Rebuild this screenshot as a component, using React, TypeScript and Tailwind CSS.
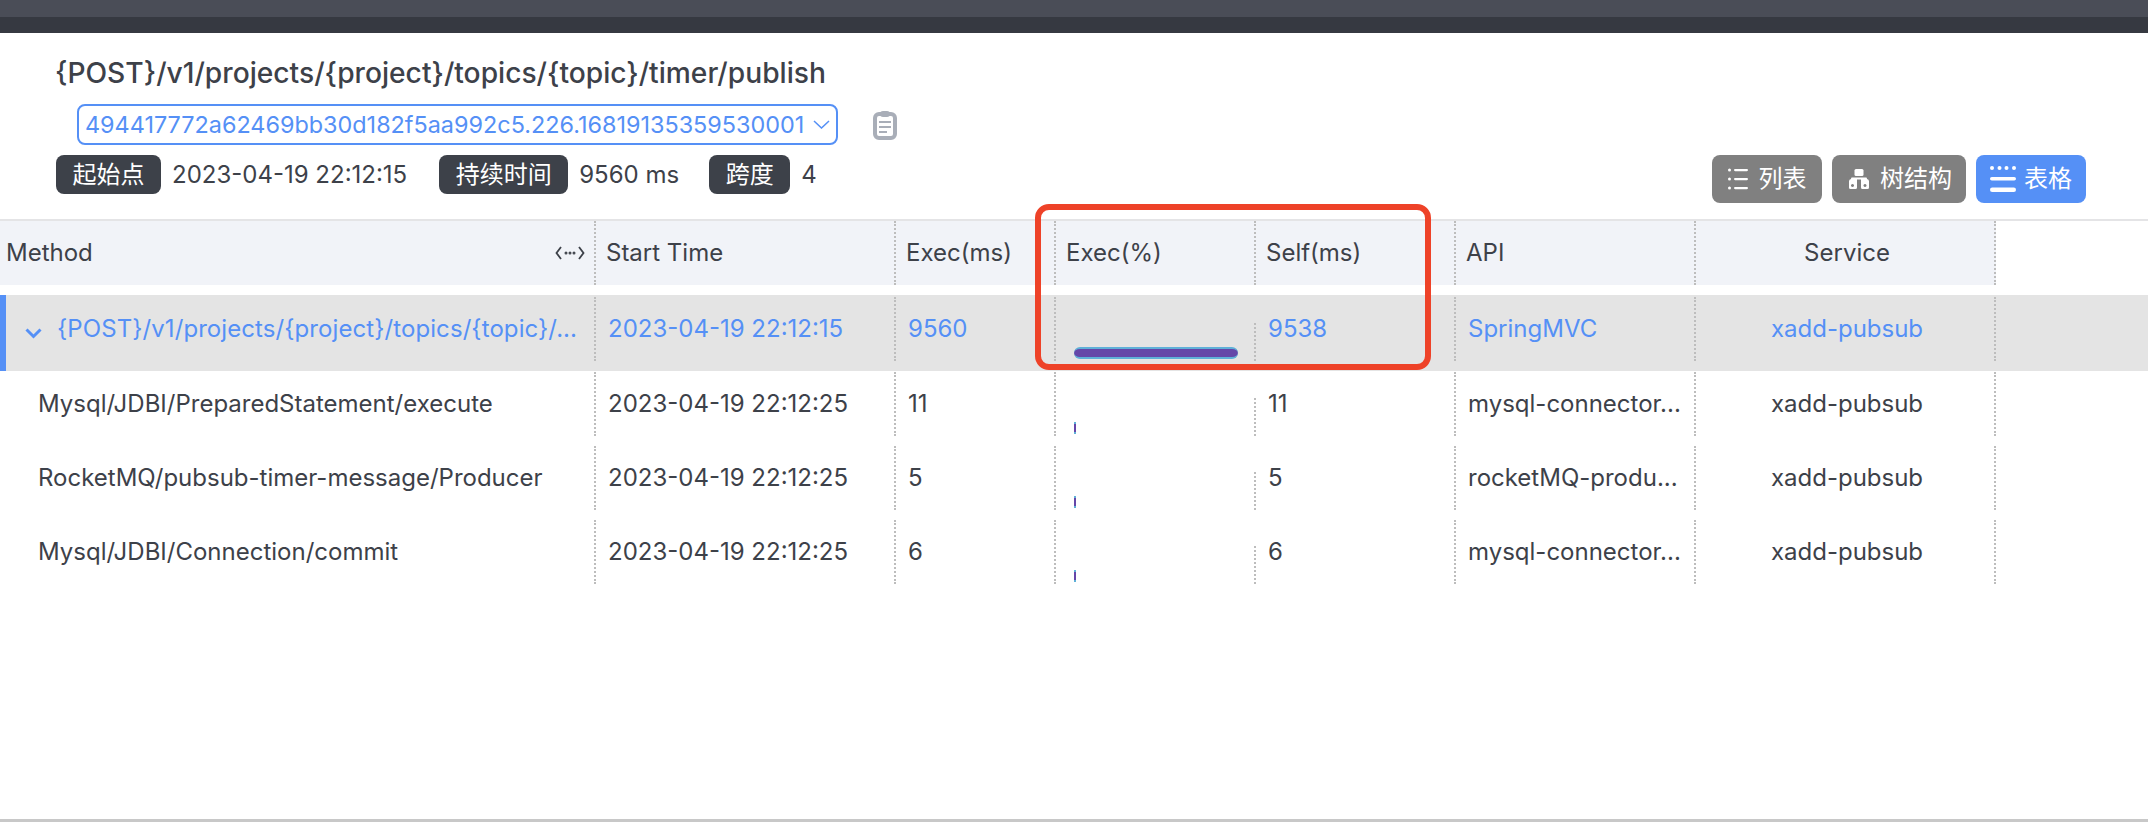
import React from "react";

const font = "[font-family:Inter,'Noto_Sans_CJK_SC',sans-serif]";

const childRows = [
  { method: "Mysql/JDBI/PreparedStatement/execute", exec: "11", pct: 2, self: "11", api: "mysql-connector..." },
  { method: "RocketMQ/pubsub-timer-message/Producer", exec: "5", pct: 2, self: "5", api: "rocketMQ-produ..." },
  { method: "Mysql/JDBI/Connection/commit", exec: "6", pct: 2, self: "6", api: "mysql-connector..." },
];

const Tag = ({ children }: { children: React.ReactNode }) => (
  <span className="flex h-[39px] items-center rounded-lg bg-[#3d4149] px-[16.5px] text-white">{children}</span>
);

const ListIcon = () => (
  <svg width="20" height="22" viewBox="0 0 20 22" fill="white">
    <circle cx="1.5" cy="2" r="1.5" />
    <circle cx="1.5" cy="11" r="1.5" />
    <circle cx="1.5" cy="20" r="1.5" />
    <rect x="6" y="1" width="14" height="2.2" rx="1.1" />
    <rect x="6" y="10" width="14" height="2.2" rx="1.1" />
    <rect x="6" y="19" width="14" height="2.2" rx="1.1" />
  </svg>
);

const TreeIcon = () => (
  <svg width="20" height="20" viewBox="0 0 20 20" fill="white">
    <rect x="5.5" y="0" width="9" height="7" rx="1.5" />
    <rect x="2" y="8.5" width="16" height="2" rx="1" />
    <path d="M2 10 h6 v8.5 a1.5 1.5 0 0 1 -1.5 1.5 h-5 a1.5 1.5 0 0 1 -1.5 -1.5 v-6 a2.5 2.5 0 0 1 2 -2.5 z M3.5 15 a1.5 1.5 0 1 0 0.01 0 z" fillRule="evenodd" />
    <path d="M12 10 h6 a2.5 2.5 0 0 1 2 2.5 v6 a1.5 1.5 0 0 1 -1.5 1.5 h-5 a1.5 1.5 0 0 1 -1.5 -1.5 z M16 15 a1.5 1.5 0 1 0 0.01 0 z" fillRule="evenodd" />
  </svg>
);

const TableIcon = () => (
  <svg width="26" height="26" viewBox="0 0 26 26" fill="white">
    <circle cx="2" cy="2" r="2" />
    <circle cx="9.5" cy="2" r="2" />
    <circle cx="16.5" cy="2" r="2" />
    <circle cx="24" cy="2" r="2" />
    <rect x="0" y="11" width="26" height="3.6" rx="1.8" />
    <rect x="0" y="21.5" width="26" height="4.5" rx="2.25" />
  </svg>
);

const ClipboardIcon = () => (
  <svg width="24" height="30" viewBox="0 0 24 30">
    <rect x="2" y="4" width="20" height="24" rx="4" fill="#fff" stroke="#a9aeb8" strokeWidth="4" />
    <rect x="7" y="1" width="10" height="6" rx="3" fill="#a9aeb8" />
    <rect x="6" y="11" width="12" height="2" fill="#a9aeb8" />
    <rect x="6" y="16" width="12" height="2" fill="#a9aeb8" />
    <rect x="6" y="21" width="8" height="2" fill="#a9aeb8" />
  </svg>
);

const DragIcon = () => (
  <svg width="30" height="16" viewBox="0 0 30 16" fill="none" stroke="#3d4149" strokeWidth="1.8">
    <path d="M6 2 L1.5 8 L6 14" />
    <path d="M24 2 L28.5 8 L24 14" />
    <circle cx="11" cy="8" r="0.6" />
    <circle cx="15" cy="8" r="0.6" />
    <circle cx="19" cy="8" r="0.6" />
  </svg>
);

const gridCols = "grid grid-cols-[596px_300px_160px_200px_200px_240px_300px]";
const dots = "border-r-2 border-dotted border-[#bdbdbd]";

export default function App() {
  return (
    <div className={`flex h-[822px] flex-col bg-white text-[24px] text-[#3d4149] ${font}`}>
      {/* top bars */}
      <div className="h-[17px] bg-[#4a4d57]" />
      <div className="h-4 bg-[#363941]" />

      <div className="flex flex-1 flex-col border-b-[3px] border-[#c8c8c8]">
        {/* header */}
        <div className="flex h-[186px] justify-between">
          <div className="flex flex-col pl-[56px] pt-[20px]">
            <h1 className="-ml-[1px] text-[28.2px] font-medium leading-[40px]">
              {"{POST}/v1/projects/{project}/topics/{topic}/timer/publish"}
            </h1>
            <div className="mt-[11px] flex items-center pl-[21px]">
              <div className="flex h-[41px] w-[761px] items-center justify-between rounded-lg border-2 border-[#5590f6] pl-[6px] pr-[6px] text-[23.4px] text-[#5590f6]">
                <span>494417772a62469bb30d182f5aa992c5.226.16819135359530001</span>
                <svg width="17" height="9" viewBox="0 0 17 9" fill="none" stroke="#5590f6" strokeWidth="1.5">
                  <path d="M1 1 L8.5 8 L16 1" />
                </svg>
              </div>
              <span className="ml-[35px]"><ClipboardIcon /></span>
            </div>
            <div className="mt-[10px] flex items-center">
              <Tag>起始点</Tag>
              <span className="ml-[11px]">2023-04-19 22:12:15</span>
              <span className="ml-[32px]"><Tag>持续时间</Tag></span>
              <span className="ml-[11px]">9560 ms</span>
              <span className="ml-[30px]"><Tag>跨度</Tag></span>
              <span className="ml-[11px]">4</span>
            </div>
          </div>
          <div className="mb-4 flex gap-[10px] self-end pr-[62px] text-white">
            <button className="flex h-[48px] w-[110px] items-center justify-center gap-[11px] rounded-lg bg-[#808080]"><ListIcon />列表</button>
            <button className="flex h-[48px] w-[134px] items-center justify-center gap-[11px] rounded-lg bg-[#808080] pl-[3px]"><TreeIcon />树结构</button>
            <button className="flex h-[48px] w-[110px] items-center justify-center gap-[8px] rounded-lg bg-[#5590f6]"><TableIcon />表格</button>
          </div>
        </div>

        {/* table */}
        <div className="relative border-t-2 border-[#e4e4e6]">
          <div className={`${gridCols} h-[64px] w-[1996px] items-stretch bg-[#f1f3f8]`}>
            <div className={`${dots} flex items-center justify-between pl-[6px] pr-[9px]`}>Method<DragIcon /></div>
            <div className={`${dots} flex items-center pl-[10px]`}>Start Time</div>
            <div className={`${dots} flex items-center pl-[10px]`}>Exec(ms)</div>
            <div className={`${dots} flex items-center pl-[10px]`}>Exec(%)</div>
            <div className={`${dots} flex items-center pl-[10px]`}>Self(ms)</div>
            <div className={`${dots} flex items-center pl-[10px]`}>API</div>
            <div className={`${dots} flex items-center justify-center pl-[4px]`}>Service</div>
          </div>

          {/* root row */}
          <div className="mt-[10px] h-[76px] border-l-[6px] border-[#5590f6] bg-[#e4e4e4] pt-[2px] text-[#5590f6]">
            <div className={`${gridCols} -ml-[6px] h-[64px]`}>
              <div className={`${dots} flex items-center`}>
                <svg className="ml-[25px] mr-[15px] mt-[8px]" width="17" height="11" viewBox="0 0 17 11" fill="none" stroke="#5590f6" strokeWidth="3">
                  <path d="M1.5 1.5 L8.5 8.5 L15.5 1.5" />
                </svg>
                <span className="tracking-[0.08px]">{"{POST}/v1/projects/{project}/topics/{topic}/..."}</span>
              </div>
              <div className={`${dots} flex items-center pl-[12px]`}>2023-04-19 22:12:15</div>
              <div className={`${dots} flex items-center pl-[12px]`}>9560</div>
              <div className="flex items-end">
                <div className="flex-1 pb-[2px] pl-[18px]">
                  <div className="h-[12px] w-[164px] rounded-full border-y-2 border-[#5fb0d8] bg-[#6546a8]" />
                </div>
                <span className={`${dots} h-[38px]`} />
              </div>
              <div className={`${dots} flex items-center pl-[12px]`}>9538</div>
              <div className={`${dots} flex items-center pl-[12px]`}>SpringMVC</div>
              <div className={`${dots} flex items-center justify-center pl-[4px]`}>xadd-pubsub</div>
            </div>
          </div>

          {/* child rows */}
          {childRows.map((row) => (
            <div key={row.method} className={`${gridCols} h-[74px] pt-[1px]`}>
              <div className={`${dots} flex h-[64px] items-center pl-[38px]`}>{row.method}</div>
              <div className={`${dots} flex h-[64px] items-center pl-[12px]`}>2023-04-19 22:12:25</div>
              <div className={`${dots} flex h-[64px] items-center pl-[12px]`}>{row.exec}</div>
              <div className="flex h-[64px] items-end">
                <div className="flex-1 pb-[2px] pl-[18px]">
                  <div className="h-[12px] border-y-2 border-[#5fb0d8] bg-[#6546a8]" style={{ width: row.pct }} />
                </div>
                <span className={`${dots} h-[38px]`} />
              </div>
              <div className={`${dots} flex h-[64px] items-center pl-[12px]`}>{row.self}</div>
              <div className={`${dots} flex h-[64px] items-center pl-[12px]`}>{row.api}</div>
              <div className={`${dots} flex h-[64px] items-center justify-center pl-[4px]`}>xadd-pubsub</div>
            </div>
          ))}

          {/* red annotation */}
          <div className="pointer-events-none absolute left-[1035px] top-[-17px] h-[166px] w-[396px] rounded-[14px] border-[6px] border-[#ee4228]" />
        </div>
      </div>
    </div>
  );
}
